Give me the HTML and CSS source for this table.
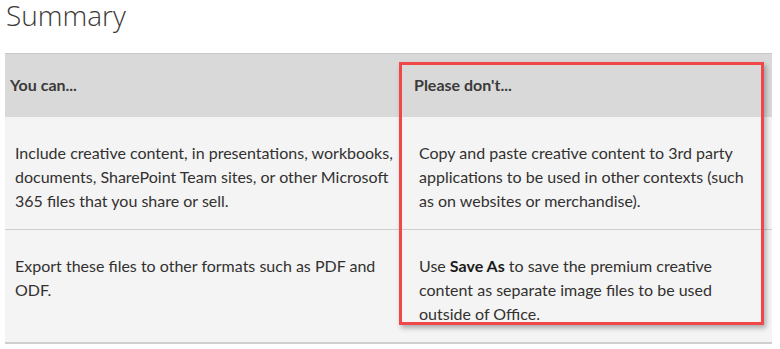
FILE: index.html
```html
<!DOCTYPE html>
<html lang="en">

<head>
  <meta charset="UTF-8" />
  <meta name="viewport" content="width=device-width, initial-scale=1" />
  <title>Summary</title>
  <link rel="stylesheet" href="styles.css">
</head>

<body>
  <main class="page">
    <h1>Summary</h1>

    <div class="table-wrap">
      <table class="summary-table">
        <thead>
          <tr>
            <th class="col-can">You can...</th>
            <th class="col-dont">Please don't...</th>
          </tr>
        </thead>
        <tbody>
          <tr>
            <td>Include creative content, in presentations, workbooks, documents, SharePoint Team sites, or other Microsoft 365 files that you share or sell.</td>
            <td>Copy and paste creative content to 3rd party applications to be used in other contexts (such as on websites or merchandise).</td>
          </tr>
          <tr>
            <td>Export these files to other formats such as PDF and ODF.</td>
            <td>Use <strong>Save As</strong> to save the premium creative content as separate image files to be used outside of Office.</td>
          </tr>
        </tbody>
      </table>

      <!-- annotation drawn over the second column -->
      <div class="highlight" aria-hidden="true"></div>
    </div>
  </main>
</body>

</html>
```

FILE: styles.css
```css
:root {
  --color-text: #323130;
  --color-head-bg: #d9d9d9;
  --color-row-bg: #f4f4f4;
  --color-rule: #cfcfcf;
  --color-mark: #f04848;
  --font-family: 'Lato', 'Open Sans', sans-serif;
}

*,
*::before,
*::after {
  box-sizing: border-box;
}

body {
  margin: 0;
  background: #ffffff;
  color: var(--color-text);
  font-family: var(--font-family);
  overflow: hidden;
}

.page {
  width: 780px;
}

h1 {
  margin: 0 0 23px 6px;
  font-family: 'Open Sans', sans-serif;
  font-weight: 300;
  font-size: 28px;
  line-height: 30px;
  color: #3b3a39;
}

.table-wrap {
  position: relative;
  margin-left: 5px;
  width: 767px;
}

.summary-table {
  width: 100%;
  border-collapse: collapse;
  table-layout: fixed;
  font-size: 16px;
  line-height: 24px;
}

.summary-table th {
  height: 63px;
  padding: 0 5px;
  background: var(--color-head-bg);
  border-top: 1px solid #c8c8c8;
  text-align: left;
  font-weight: 700;
  font-size: 16px;
  color: #3b3a39;
}

.summary-table .col-can {
  width: 404px;
}

.summary-table td {
  height: 113px;
  padding: 24px 8px 0 10px;
  background: var(--color-row-bg);
  border-bottom: 1px solid var(--color-rule);
  vertical-align: top;
}

.summary-table td + td {
  padding-right: 16px;
}

.summary-table tbody tr:last-child td {
  border-bottom: 2px solid var(--color-rule);
}

.summary-table strong {
  font-weight: 700;
  color: #1b1a19;
}

.highlight {
  position: absolute;
  left: 394px;
  top: 9px;
  width: 365px;
  height: 263px;
  border: 3px solid var(--color-mark);
  box-shadow: 2px 3px 5px rgba(0, 0, 0, 0.3);
}
```
